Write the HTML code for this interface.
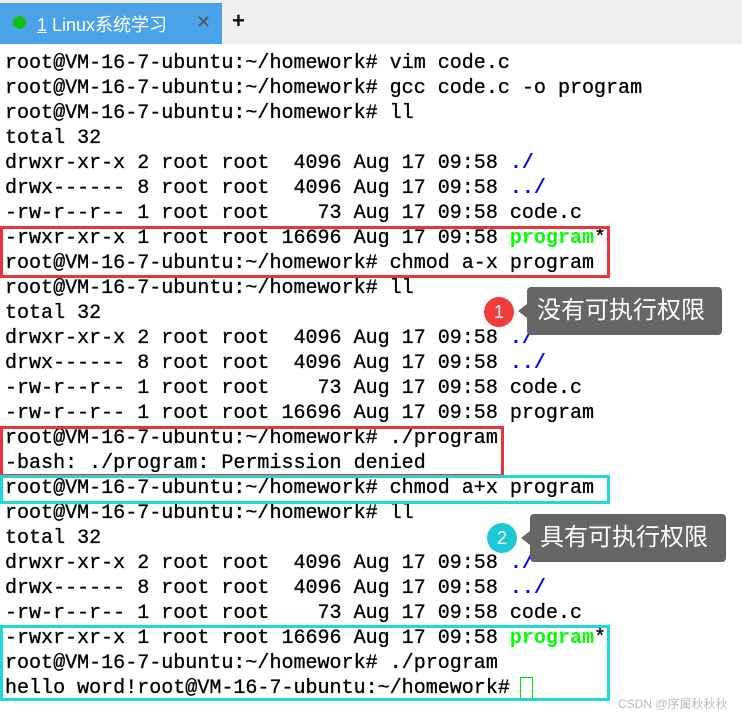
<!DOCTYPE html>
<html><head><meta charset="utf-8"><style>
body{margin:0;width:742px;height:716px;background:#fff;position:relative;overflow:hidden;font-family:"Liberation Sans","Noto Sans CJK SC",sans-serif}
.bar{position:absolute;left:0;top:0;width:742px;height:44px;background:#f0f0f0}
.tab{position:absolute;left:0;top:3px;width:222px;height:41px;background:#4aa3e8}
.dot{position:absolute;left:13px;top:16px;width:13px;height:13px;border-radius:50%;background:#10c010}
.tt{position:absolute;left:37px;top:11px;color:#fff;font-size:18px}
.x{position:absolute;left:196px;top:12px;color:#555;font-size:18px}
.plus{position:absolute;left:232px;top:8px;color:#111;font-size:22px;font-weight:bold}
pre{position:absolute;left:5px;top:51px;margin:0;font-family:"Liberation Mono",monospace;font-size:20.05px;line-height:25px;color:#000;-webkit-text-stroke:0.3px #000}
.b{color:#0000ff;font-weight:bold;-webkit-text-stroke:0}.g{color:#00ff00;font-weight:bold;-webkit-text-stroke:0}
.box{position:absolute;border:3px solid #e8343a;box-sizing:border-box}
.c{border-color:#1ed8dc}
.circ{position:absolute;width:30px;height:30px;border-radius:50%;color:#fff;font-size:18px;text-align:center;line-height:30px}
.call{position:absolute;background:#666;color:#fff;font-size:24px;border-radius:4px;padding-left:10px;line-height:48px;height:48px;box-sizing:border-box}
.call:before{content:"";position:absolute;left:-9px;top:17px;border-right:9px solid #666;border-top:7px solid transparent;border-bottom:7px solid transparent}
.cur{position:absolute;left:520px;top:677px;width:11px;height:22px;border:1px solid #00e000}
.wm{position:absolute;left:618px;top:695px;font-size:12px;color:#bbb}
</style></head><body>
<div class="bar"></div><div class="tab"></div><div class="dot"></div>
<div class="tt"><u>1</u> Linux系统学习</div><div class="x">✕</div><div class="plus">+</div>
<pre>root@VM-16-7-ubuntu:~/homework# vim code.c
root@VM-16-7-ubuntu:~/homework# gcc code.c -o program
root@VM-16-7-ubuntu:~/homework# ll
total 32
drwxr-xr-x 2 root root  4096 Aug 17 09:58 <span class="b">./</span>
drwx------ 8 root root  4096 Aug 17 09:58 <span class="b">../</span>
-rw-r--r-- 1 root root    73 Aug 17 09:58 code.c
-rwxr-xr-x 1 root root 16696 Aug 17 09:58 <span class="g">program</span>*
root@VM-16-7-ubuntu:~/homework# chmod a-x program
root@VM-16-7-ubuntu:~/homework# ll
total 32
drwxr-xr-x 2 root root  4096 Aug 17 09:58 <span class="b">./</span>
drwx------ 8 root root  4096 Aug 17 09:58 <span class="b">../</span>
-rw-r--r-- 1 root root    73 Aug 17 09:58 code.c
-rw-r--r-- 1 root root 16696 Aug 17 09:58 program
root@VM-16-7-ubuntu:~/homework# ./program
-bash: ./program: Permission denied
root@VM-16-7-ubuntu:~/homework# chmod a+x program
root@VM-16-7-ubuntu:~/homework# ll
total 32
drwxr-xr-x 2 root root  4096 Aug 17 09:58 <span class="b">./</span>
drwx------ 8 root root  4096 Aug 17 09:58 <span class="b">../</span>
-rw-r--r-- 1 root root    73 Aug 17 09:58 code.c
-rwxr-xr-x 1 root root 16696 Aug 17 09:58 <span class="g">program</span>*
root@VM-16-7-ubuntu:~/homework# ./program
hello word!root@VM-16-7-ubuntu:~/homework# </pre>
<div class="cur"></div>
<div class="box" style="left:0;top:226px;width:610px;height:52px"></div>
<div class="box" style="left:0;top:426px;width:504px;height:51px"></div>
<div class="box c" style="left:0;top:475px;width:610px;height:29px"></div>
<div class="box c" style="left:0;top:625px;width:610px;height:76px"></div>
<div class="circ" style="left:484px;top:297px;background:#f03c3c">1</div>
<div class="call" style="left:527px;top:287px;width:195px">没有可执行权限</div>
<div class="circ" style="left:487px;top:523px;background:#1ec8d4">2</div>
<div class="call" style="left:530px;top:514px;width:196px">具有可执行权限</div>
<div class="wm">CSDN @序属秋秋秋</div>
</body></html>
